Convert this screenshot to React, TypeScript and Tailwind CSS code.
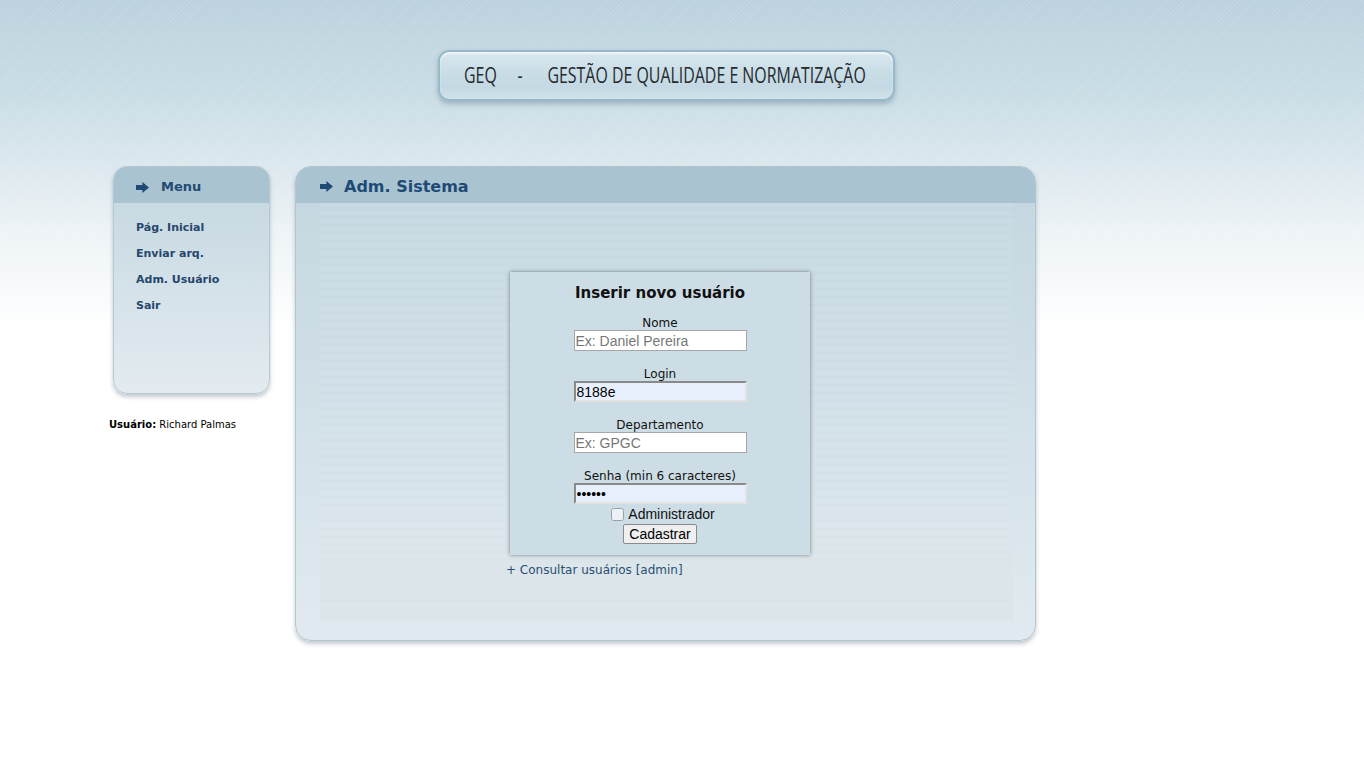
import React from "react";

function Arrow({ className = "" }: { className?: string }) {
  return (
    <svg viewBox="0 0 13 11" className={className} aria-hidden>
      <path d="M0 3h6.4V0L13 5.5 6.4 11V8H0z" fill="#1f4a76" />
    </svg>
  );
}

const menu = ["Pág. Inicial", "Enviar arq.", "Adm. Usuário", "Sair"];

function Field({
  label,
  placeholder,
  value,
  type = "text",
  filled = false,
}: {
  label: string;
  placeholder?: string;
  value?: string;
  type?: string;
  filled?: boolean;
}) {
  return (
    <div className="mb-[16px] flex flex-col items-center">
      <label className="h-[14px] text-[12px] leading-[14px] text-[#111] font-['DejaVu_Sans',sans-serif]">
        {label}
      </label>
      <input
        type={type}
        readOnly
        placeholder={placeholder}
        defaultValue={value}
        className={
          filled
            ? "h-[21px] w-[173px] border-2 border-t-[#8a8a8a] border-l-[#8a8a8a] border-r-[#e3e3e3] border-b-[#e3e3e3] bg-[#e8f0fe] px-[1px] text-[14px] leading-[17px] text-black outline-none font-['Liberation_Sans',Arial,sans-serif]"
            : "h-[21px] w-[173px] border border-[#a6a6a6] bg-white px-[1px] text-[14px] leading-[19px] text-black outline-none placeholder:text-[#777] font-['Liberation_Sans',Arial,sans-serif]"
        }
      />
    </div>
  );
}

export default function App() {
  return (
    <div className="min-h-[775px] w-full bg-[repeating-linear-gradient(135deg,rgba(255,255,255,0.10)_0px,rgba(255,255,255,0.10)_1px,transparent_1px,transparent_3px),linear-gradient(180deg,#bbd2de_0px,#c8dce5_90px,#dae7ed_160px,#edf3f6_230px,#ffffff_330px)] font-['DejaVu_Sans',sans-serif]">
      <header className="pl-[438px] pt-[50px]">
        <div className="flex h-[51px] w-[457px] items-center rounded-[11px] border-2 border-[#98b9c9] bg-[linear-gradient(180deg,#d9e8ef_0%,#c9dde7_45%,#c4d9e3_75%,#d0e2ea_100%)] pl-[24px] shadow-[0_3px_5px_rgba(70,100,120,0.35),inset_0_2px_2px_rgba(255,255,255,0.6)]">
          <span className="inline-block origin-left scale-x-[0.758] whitespace-pre text-[21px] leading-none text-[#262a2d] font-['Open_Sans',sans-serif]">
            GEQ{"     -      "}GESTÃO DE QUALIDADE E NORMATIZAÇÃO
          </span>
        </div>
      </header>

      <div className="mt-[65px] flex pl-[109px]">
        <aside className="w-[161px]">
          <nav className="ml-[4px] h-[228px] w-[157px] overflow-hidden rounded-[14px] border border-[#b3c9d4] bg-[linear-gradient(180deg,#c3d6df_0%,#d3e1e8_50%,#e3ebf0_100%)] shadow-[0_3px_4px_rgba(60,80,95,0.3)]">
            <div className="flex h-[36px] items-center gap-[12px] bg-[#a9c4d0] pl-[22px] pt-[4px]">
              <Arrow className="h-[11px] w-[13px]" />
              <span className="text-[13px] font-bold text-[#234b74]">Menu</span>
            </div>
            <ul className="pl-[22px] pt-[12px]">
              {menu.map((m) => (
                <li
                  key={m}
                  className="h-[26px] text-[11px] font-bold leading-[26px] text-[#26466c]"
                >
                  {m}
                </li>
              ))}
            </ul>
          </nav>
          <p className="mt-[25px] text-[10px] leading-[12px] text-black">
            <b>Usuário:</b> Richard Palmas
          </p>
        </aside>

        <main className="ml-[25px] flex h-[475px] w-[741px] flex-col overflow-hidden rounded-[16px] border border-[#b0c6d1] bg-[linear-gradient(180deg,#c3d6df_0%,#d3e1e8_55%,#e2eaf1_100%)] shadow-[0_3px_4px_rgba(60,80,95,0.3)]">
          <div className="flex h-[36px] shrink-0 items-center gap-[11px] bg-[#a9c4d0] pl-[24px] pt-[3px]">
            <Arrow className="h-[11px] w-[13px]" />
            <h1 className="text-[16px] font-bold text-[#1f4a76]">Adm. Sistema</h1>
          </div>
          <div className="ml-[24px] mr-[22px] h-[418px] bg-[repeating-linear-gradient(180deg,rgba(255,255,255,0.06)_0px,rgba(255,255,255,0.06)_4px,transparent_4px,transparent_8px),linear-gradient(180deg,#c5d8e1_0%,#d0dfe7_45%,#dae5eb_80%,#dbe4e8_100%)] pt-[69px]">
            <form className="ml-[190px] w-[300px] bg-[#cddde5] pb-[11px] pt-[12px] shadow-[0_0_4px_rgba(0,0,0,0.45)]">
              <h2 className="mb-[14px] text-center text-[15px] font-bold leading-[18px] text-[#111]">
                Inserir novo usuário
              </h2>
              <Field label="Nome" placeholder="Ex: Daniel Pereira" />
              <Field label="Login" value="8188e" filled />
              <Field label="Departamento" placeholder="Ex: GPGC" />
              <div className="-mb-[13px]">
                <Field label="Senha (min 6 caracteres)" type="password" value="123456" filled />
              </div>
              <div className="flex h-[14px] items-center justify-center gap-[4px] pl-[6px] text-[14px] leading-[14px] text-[#111] font-['Liberation_Sans',Arial,sans-serif]">
                <input type="checkbox" readOnly className="m-0 h-[13px] w-[13px] opacity-60" />
                <span>Administrador</span>
              </div>
              <div className="mt-[3px] flex justify-center">
                <button
                  type="button"
                  className="h-[20px] w-[74px] rounded-[2px] border border-[#8a8a8a] bg-[#efefef] text-[14px] leading-[18px] text-black font-['Liberation_Sans',Arial,sans-serif]"
                >
                  Cadastrar
                </button>
              </div>
            </form>
            <a className="ml-[186px] mt-[8px] block text-[12px] leading-[14px] text-[#2a4e73]">
              + Consultar usuários [admin]
            </a>
          </div>
        </main>
      </div>
    </div>
  );
}
